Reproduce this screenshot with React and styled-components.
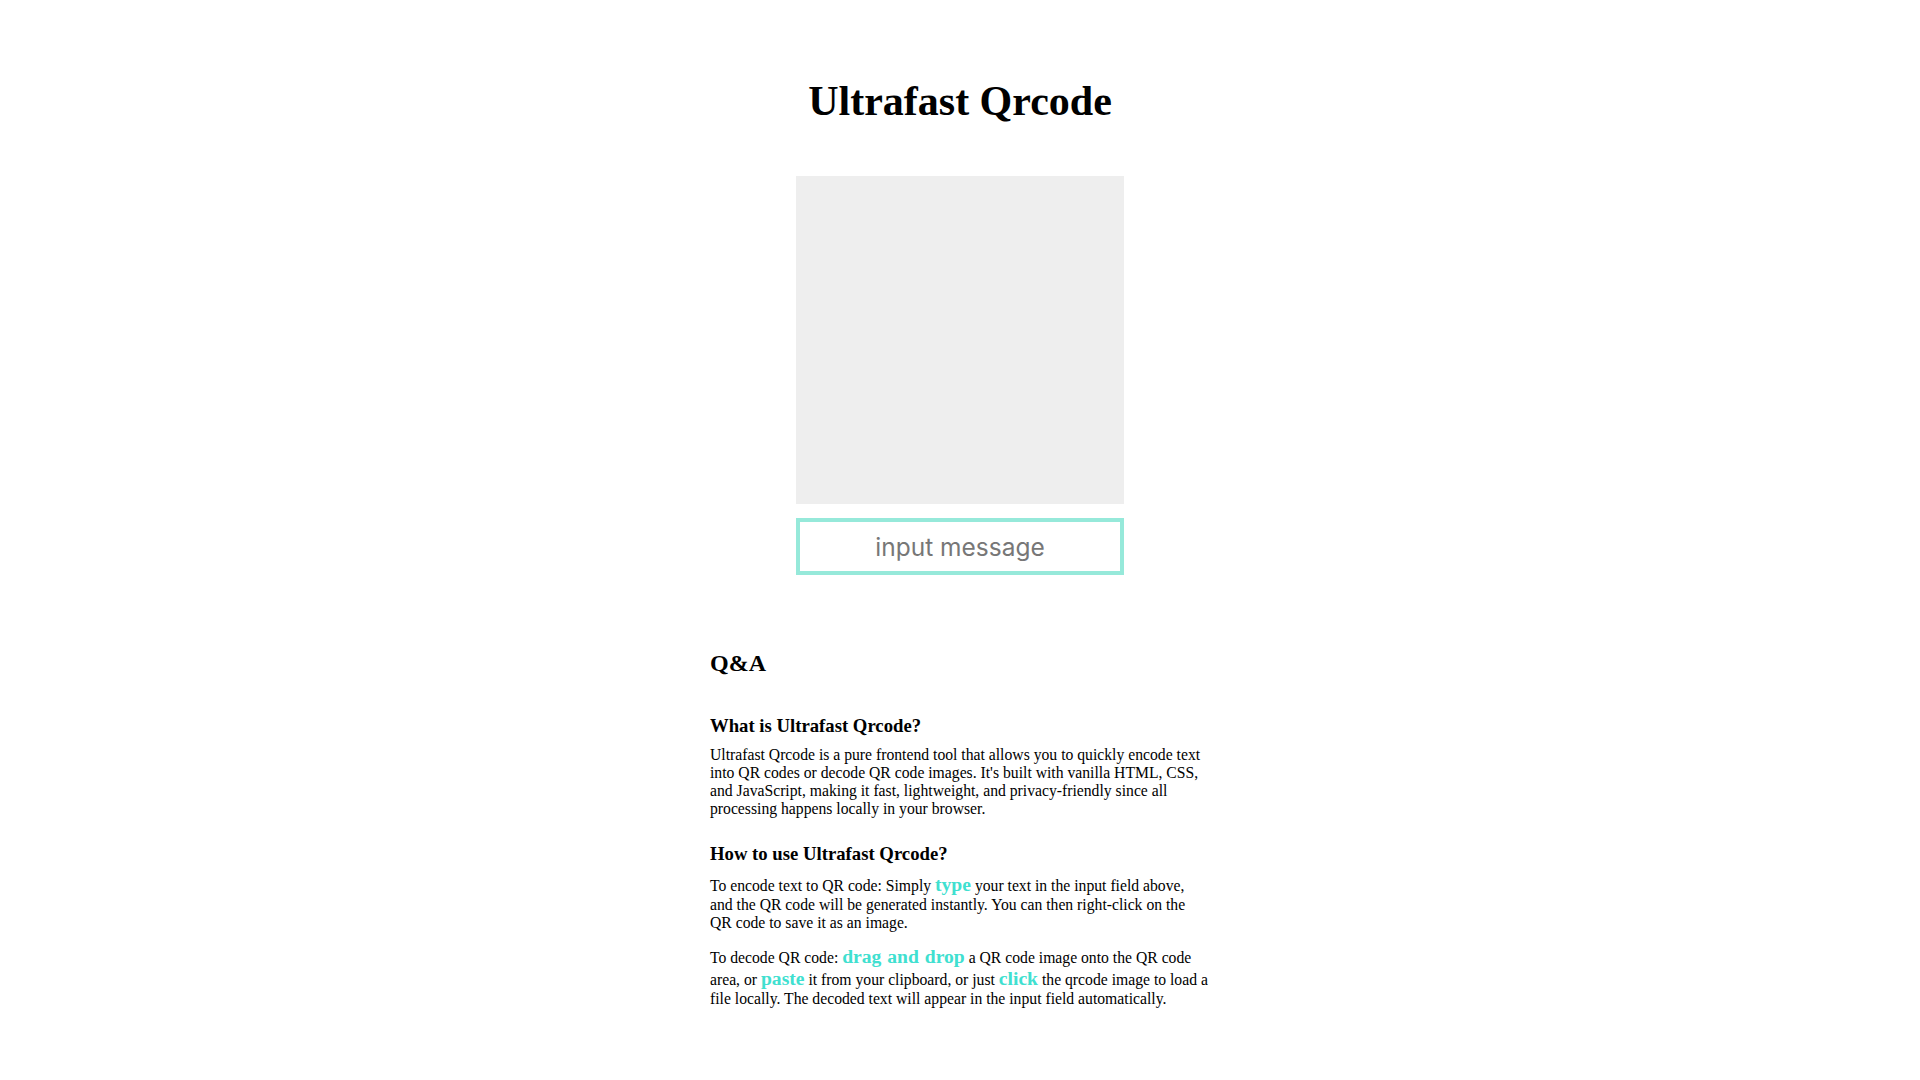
import React, { useState } from 'react'
import styled, { createGlobalStyle } from 'styled-components';

const GlobalStyle = createGlobalStyle`
    html, body {
        margin: 0;
        padding: 0;
        background: #fff;
    }

    body {
        font-family: "Liberation Serif", "Times New Roman", serif;
        font-size: 16px;
        color: #000;
    }
`;

export default function App() {
    const [message, setMessage] = useState('');

    return (
        <>
            <GlobalStyle />
            <Page>
                <Title>Ultrafast Qrcode</Title>

                <QrArea title="click, paste or drop an image" />
                <MessageInput
                    type="text"
                    placeholder="input message"
                    value={message}
                    onChange={(e) => setMessage(e.target.value)}
                />

                <Faq>
                    <FaqTitle>Q&amp;A</FaqTitle>

                    <Question first>
                        <h3>What is Ultrafast Qrcode?</h3>
                        <p>
                            Ultrafast Qrcode is a pure frontend tool that allows you to quickly encode text
                            into QR codes or decode QR code images. It's built with vanilla HTML, CSS,
                            and JavaScript, making it fast, lightweight, and privacy-friendly since all
                            processing happens locally in your browser.
                        </p>
                    </Question>

                    <Question>
                        <h3>How to use Ultrafast Qrcode?</h3>
                        <p>
                            To encode text to QR code: Simply <Hint>type</Hint> your text in the input field above,
                            and the QR code will be generated instantly. You can then right-click on the
                            QR code to save it as an image.
                        </p>
                        <p>
                            To decode QR code: <Hint>drag and drop</Hint> a QR code image onto the QR code
                            area, or <Hint>paste</Hint> it from your clipboard, or just <Hint>click</Hint> the qrcode image to load a
                            file locally. The decoded text will appear in the input field automatically.
                        </p>
                    </Question>
                </Faq>
            </Page>
        </>
    )
}

const Page = styled.main`
    display: flex;
    flex-direction: column;
    align-items: center;
    padding: 77px 0 60px;
`;

const Title = styled.h1`
    margin: 0 0 51px;
    font-size: 42px;
    font-weight: bold;
    line-height: normal;
`;

const QrArea = styled.div`
    width: 328px;
    height: 328px;
    background-color: #eeeeee;
    cursor: pointer;
`;

const MessageInput = styled.input`
    box-sizing: border-box;
    width: 328px;
    height: 57px;
    margin-top: 14px;
    border: 4px solid #96e9da;
    outline: none;
    padding: 0 10px;
    font-family: Inter, "Noto Sans", sans-serif;
    font-size: 24.5px;
    text-align: center;
    color: #333;

    &::placeholder {
        color: #777;
    }
`;

const Faq = styled.section`
    width: 500px;
    margin-top: 75px;
`;

const FaqTitle = styled.h2`
    margin: 0;
    font-size: 24px;
    font-weight: bold;
    line-height: normal;
`;

const Question = styled.div`
    margin-top: ${(p) => (p.first ? '38px' : '25px')};

    h3 {
        margin: 0 0 9px;
        font-size: 18.72px;
        font-weight: bold;
        line-height: normal;
    }

    p {
        margin: 0;
        font-size: 15.7px;
        line-height: normal;
    }

    p + p {
        margin-top: 14px;
    }
`;

const Hint = styled.span`
    font-size: 19.6px;
    font-weight: bold;
    word-spacing: 1px;
    color: #40e0d0;
`;
